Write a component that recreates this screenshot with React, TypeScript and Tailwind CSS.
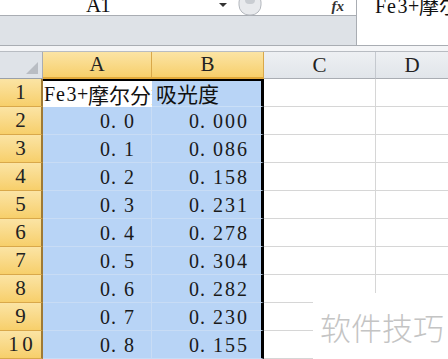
import React from "react";

const serif = { fontFamily: '"Liberation Serif", "Noto Sans CJK SC", serif' };
const cjk = { fontFamily: '"Noto Sans CJK SC", sans-serif' };

const rows: [string, string][] = [
  ["0.0", "0.000"],
  ["0.1", "0.086"],
  ["0.2", "0.158"],
  ["0.3", "0.231"],
  ["0.4", "0.278"],
  ["0.5", "0.304"],
  ["0.6", "0.282"],
  ["0.7", "0.230"],
  ["0.8", "0.155"],
];

function Mono({ text, w = 12 }: { text: string; w?: number }) {
  return (
    <span className="inline-flex whitespace-nowrap" style={serif}>
      {text.split("").map((c, i) => (
        <span
          key={i}
          className={c === "." ? "inline-block text-left" : "inline-block text-center"}
          style={{ width: w }}
        >
          {c}
        </span>
      ))}
    </span>
  );
}

function RowHead({ n }: { n: number }) {
  return (
    <div className="w-[43px] h-full flex items-center justify-center bg-gradient-to-b from-[#fbe4a4] to-[#f7cf6a] border-b border-[#d9a84a] border-r-2 border-r-[#a07a34] text-[21px] text-[#222] leading-none">
      <Mono text={String(n)} w={14} />
    </div>
  );
}

export default function App() {
  return (
    <div className="w-[448px] h-[359px] overflow-hidden relative bg-white" style={serif}>
      {/* formula bar */}
      <div className="flex h-[46px] border-b border-[#a9adb3]">
        <div className="w-[356px] flex flex-col">
          <div className="h-[16px] flex items-center bg-white border-b border-[#a9adb3] relative">
            <div className="w-[208px] flex justify-center pr-[10px] text-[21px] leading-none text-[#111] -mt-[5px]">
              <Mono text="A1" w={13} />
            </div>
            <svg width="10" height="6" className="ml-[10px] -mt-[6px]" viewBox="0 0 10 6">
              <path d="M1 1 L9 1 L5 5 Z" fill="#333" />
            </svg>
            <svg width="24" height="16" className="ml-[10px]" viewBox="0 0 24 16">
              <rect x="1" y="-8" width="22" height="23" rx="10" fill="#e8eaed" stroke="#b4b8be" />
              <rect x="7" y="-6" width="10" height="10" rx="4" fill="#c9cdd2" />
            </svg>
            <div className="ml-auto mr-[12px] text-[15px] italic font-bold text-[#333] leading-none -mt-[2px]">
              fx
            </div>
          </div>
          <div className="flex-1 bg-[#dee2e7]"></div>
        </div>
        <div className="flex-1 bg-white border-l border-[#a9adb3] pl-[18px] text-[20px] leading-none text-[#111] -mt-[4px] whitespace-nowrap overflow-hidden flex">
          <Mono text="Fe3+" w={11} />
          <span style={cjk} className="text-[20px]">摩尔分数</span>
        </div>
      </div>
      <div className="h-[6px] bg-[#f4f5f7] border-b border-[#b8bcc2]"></div>

      {/* column headers */}
      <div className="flex h-[27px] text-[21px] leading-none text-[#222]">
        <div className="w-[43px] bg-[#dfe3e8] border-r border-[#a9adb3] border-b border-b-[#9aa0a8] flex items-end justify-end p-[3px]">
          <svg width="14" height="14" viewBox="0 0 14 14">
            <path d="M13 1 L13 13 L1 13 Z" fill="#b9bdc3" />
          </svg>
        </div>
        <div className="w-[109px] bg-gradient-to-b from-[#fbe4a4] to-[#f7cf6a] border-r border-[#d9a84a] border-b-2 border-b-[#e2a93a] flex items-center justify-center">A</div>
        <div className="w-[112px] bg-gradient-to-b from-[#fbe4a4] to-[#f7cf6a] border-r border-[#d9a84a] border-b-2 border-b-[#e2a93a] flex items-center justify-center">B</div>
        <div className="w-[112px] bg-gradient-to-b from-[#eef0f3] to-[#e1e5ea] border-r border-[#c5c9cf] border-b border-b-[#a9adb3] flex items-center justify-center">C</div>
        <div className="flex-1 bg-gradient-to-b from-[#eef0f3] to-[#e1e5ea] border-b border-b-[#a9adb3] flex items-center justify-center">D</div>
      </div>

      {/* row 1 */}
      <div className="flex h-[28px] text-[20px] leading-none text-[#111]">
        <RowHead n={1} />
        <div className="w-[109px] bg-white border-t-2 border-t-black flex items-center overflow-hidden whitespace-nowrap pl-[1px]">
          <Mono text="Fe3+" w={11} />
          <span style={cjk} className="text-[21px]">摩尔分数</span>
        </div>
        <div className="w-[112px] bg-[#b8d4f6] border-t-2 border-t-black border-r-[3px] border-r-black border-b border-b-[#cadff7] flex items-center pl-[4px] text-[21px]" style={cjk}>
          吸光度
        </div>
        <div className="w-[112px] border-r border-[#d6d6d6] border-b border-b-[#d6d6d6]"></div>
        <div className="flex-1 border-b border-[#d6d6d6]"></div>
      </div>

      {rows.map(([a, b], i) => (
        <div key={i} className="flex h-[28px] text-[20px] leading-none text-[#1a1a1a]">
          <RowHead n={i + 2} />
          <div className="w-[109px] bg-[#b8d4f6] border-r border-r-[#c8dcf5] border-b border-b-[#c8dcf5] flex items-center justify-end pr-[16px]">
            <Mono text={a} />
          </div>
          <div className="w-[112px] bg-[#b8d4f6] border-r-[3px] border-r-black border-b border-b-[#c8dcf5] flex items-center justify-end pr-[13px]">
            <Mono text={b} />
          </div>
          <div className="w-[112px] border-r border-[#d6d6d6] border-b border-b-[#d6d6d6]"></div>
          <div className="flex-1 border-b border-[#d6d6d6]"></div>
        </div>
      ))}

      {/* watermark */}
      <div className="absolute left-[313px] top-[293px] w-[135px] h-[66px] bg-white flex items-center justify-end pr-[4px]">
        <span className="text-[31px] leading-none text-[#c4c4c4] mt-[1px]" style={{ ...cjk, fontWeight: 300 }}>
          软件技巧
        </span>
      </div>
    </div>
  );
}
